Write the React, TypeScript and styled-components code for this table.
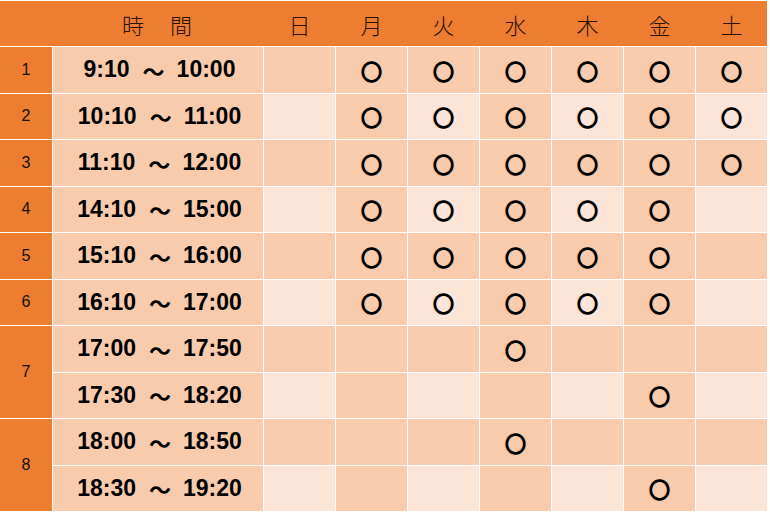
import React from "react";
import styled, { createGlobalStyle } from "styled-components";

const Global = createGlobalStyle`
  html, body { margin: 0; padding: 0; background: #ffffff; }
  body { font-family: "Liberation Sans", "Noto Sans CJK JP", sans-serif; }
`;

const COLS = "52px 210px repeat(7, 71px)";

const Table = styled.div`
  width: 767px;
  padding-top: 1px;
  display: flex;
  flex-direction: column;
  gap: 1px;
  background: #ffffff;
`;

const HeaderRow = styled.div`
  display: grid;
  grid-template-columns: ${COLS};
  column-gap: 1px;
  height: 45px;
  background: #ed7d31;
`;

const HeadCell = styled.div<{ $wide?: boolean }>`
  display: flex;
  align-items: center;
  justify-content: center;
  font-family: "Noto Sans CJK JP", sans-serif;
  font-size: 22px;
  font-weight: 300;
  color: #2a1206;
  grid-column: ${(p) => (p.$wide ? "2" : "auto")};
  letter-spacing: ${(p) => (p.$wide ? "2px" : "0")};
  padding-top: 1px;
`;

const Body = styled.div`
  display: grid;
  grid-template-columns: ${COLS};
  grid-template-rows: repeat(10, 45.5px);
  gap: 1px;
  background: #ffffff;
`;

const NumCell = styled.div<{ $span: number }>`
  grid-row: span ${(p) => p.$span};
  background: #ed7d31;
  display: flex;
  align-items: center;
  justify-content: center;
  font-family: "Liberation Sans", sans-serif;
  font-size: 16px;
  color: #111;
`;

const TimeCell = styled.div`
  grid-column: 2;
  background: #f8cbad;
  display: flex;
  align-items: center;
  justify-content: center;
  font-family: "Liberation Sans", "Noto Sans CJK JP", sans-serif;
  font-size: 23px;
  font-weight: 700;
  color: #000;
  padding-left: 3px;
  white-space: pre;
`;

const Clock = styled.span`
  display: inline-block;
  transform: scaleY(1.05);
`;

const Wave = styled.span`
  font-family: "Noto Sans CJK JP", sans-serif;
  font-weight: 700;
  margin: 0 12px 0 13px;
  font-size: 22px;
`;

const DayCell = styled.div<{ $dark: boolean }>`
  background: ${(p) => (p.$dark ? "#f8cbad" : "#fce4d6")};
  display: flex;
  align-items: center;
  justify-content: center;
  font-family: "Noto Sans CJK JP", sans-serif;
  font-size: 22px;
  font-weight: 700;
  color: #000;
`;

const days = ["日", "月", "火", "水", "木", "金", "土"];

type Row = { n?: string; span?: number; from: string; to: string; marks: number[] };

const rows: Row[] = [
  { n: "1", span: 1, from: "9:10", to: "10:00", marks: [0, 1, 1, 1, 1, 1, 1] },
  { n: "2", span: 1, from: "10:10", to: "11:00", marks: [0, 1, 1, 1, 1, 1, 1] },
  { n: "3", span: 1, from: "11:10", to: "12:00", marks: [0, 1, 1, 1, 1, 1, 1] },
  { n: "4", span: 1, from: "14:10", to: "15:00", marks: [0, 1, 1, 1, 1, 1, 0] },
  { n: "5", span: 1, from: "15:10", to: "16:00", marks: [0, 1, 1, 1, 1, 1, 0] },
  { n: "6", span: 1, from: "16:10", to: "17:00", marks: [0, 1, 1, 1, 1, 1, 0] },
  { n: "7", span: 2, from: "17:00", to: "17:50", marks: [0, 0, 0, 1, 0, 0, 0] },
  { from: "17:30", to: "18:20", marks: [0, 0, 0, 0, 0, 1, 0] },
  { n: "8", span: 2, from: "18:00", to: "18:50", marks: [0, 0, 0, 1, 0, 0, 0] },
  { from: "18:30", to: "19:20", marks: [0, 0, 0, 0, 0, 1, 0] },
];

export default function App() {
  return (
    <>
      <Global />
      <Table>
        <HeaderRow>
          <HeadCell $wide>時　間</HeadCell>
          {days.map((d) => (
            <HeadCell key={d}>{d}</HeadCell>
          ))}
        </HeaderRow>
        <Body>
          {rows.map((r, ri) => (
            <React.Fragment key={ri}>
              {r.n && <NumCell $span={r.span ?? 1}>{r.n}</NumCell>}
              <TimeCell>
                <Clock>{r.from}</Clock>
                <Wave>～</Wave>
                <Clock>{r.to}</Clock>
              </TimeCell>
              {r.marks.map((m, di) => (
                <DayCell key={di} $dark={ri % 2 === 0 || di % 2 === 1}>
                  {m ? "〇" : ""}
                </DayCell>
              ))}
            </React.Fragment>
          ))}
        </Body>
      </Table>
    </>
  );
}
